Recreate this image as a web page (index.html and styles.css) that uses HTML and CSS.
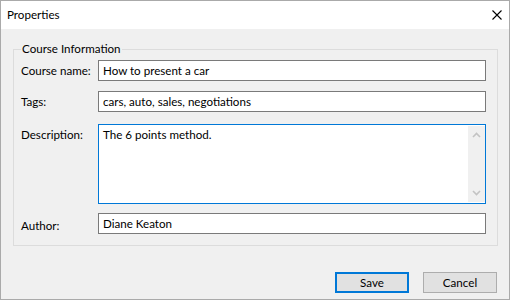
FILE: index.html
```html
<!DOCTYPE html>
<html>
<head>
    <title>Properties</title>
    <link rel="stylesheet" href="styles.css">
</head>
<body>
    <div class="window">
        <div class="titlebar">
            <span class="title">Properties</span>
            <svg class="close" width="10" height="10" viewBox="0 0 10 10">
                <path d="M0.5 0.5 L9.5 9.5 M9.5 0.5 L0.5 9.5" stroke="#000" stroke-width="1.1" fill="none"/>
            </svg>
        </div>

        <div class="content">
            <fieldset class="group">
                <legend>Course Information</legend>

                <div class="row">
                    <label>Course name:</label>
                    <input class="field" type="text" value="How to present a car">
                </div>

                <div class="row">
                    <label>Tags:</label>
                    <input class="field" type="text" value="cars, auto, sales, negotiations">
                </div>

                <div class="row row-memo">
                    <label>Description:</label>
                    <div class="memo">
                        <textarea>The 6 points method.</textarea>
                        <div class="vscroll">
                            <svg width="9" height="6" viewBox="0 0 9 6"><path d="M1 5 L4.5 1.5 L8 5" stroke="#c3c3c3" stroke-width="1.6" fill="none"/></svg>
                            <svg width="9" height="6" viewBox="0 0 9 6"><path d="M1 1 L4.5 4.5 L8 1" stroke="#c3c3c3" stroke-width="1.6" fill="none"/></svg>
                        </div>
                    </div>
                </div>

                <div class="row row-author">
                    <label>Author:</label>
                    <input class="field" type="text" value="Diane Keaton">
                </div>
            </fieldset>

            <div class="buttons">
                <button class="btn btn-default">Save</button>
                <button class="btn">Cancel</button>
            </div>
        </div>
    </div>
</body>
</html>
```

FILE: styles.css
```css
body {
    margin: 0;
    font-family: Lato, "Liberation Sans", Arial, sans-serif;
    font-size: 11.6px;
    color: #000;
}
.window {
    width: 510px;
    height: 300px;
    box-sizing: border-box;
    border: 1px solid #aaaaaa;
    background-color: #f0f0f0;
    display: flex;
    flex-direction: column;
}
.titlebar {
    height: 28px;
    background: white;
    display: flex;
    align-items: center;
    justify-content: space-between;
    padding: 0 7px 0 6px;
}
.title {
    margin-top: -1px;
}
.close {
    display: block;
    margin-top: -1px;
}
.content {
    padding: 12px 11px 0 12px;
}
.group {
    margin: 0;
    border: 1px solid #dcdcdc;
    padding: 3px 10px 11px 7px;
}
.group legend {
    padding: 0 1px;
    line-height: 16px;
}
.row {
    display: flex;
    align-items: center;
    margin-bottom: 10px;
}
.row label {
    width: 77px;
    flex: none;
}
.field {
    width: 388px;
    height: 21px;
    box-sizing: border-box;
    border: 1px solid #7a7a7a;
    background: white;
    padding: 0 4px;
    margin: 0;
    font-family: inherit;
    font-size: inherit;
    color: #000;
    outline: none;
}
.row-memo {
    align-items: flex-start;
    margin-top: 12px;
    margin-bottom: 9px;
}
.row-memo label {
    padding-top: 4px;
}
.memo {
    width: 388px;
    height: 80px;
    box-sizing: border-box;
    border: 1px solid #0078d7;
    background: white;
    display: flex;
}
.memo textarea {
    flex: 1;
    border: none;
    resize: none;
    outline: none;
    margin: 0;
    padding: 3px 4px;
    font-family: inherit;
    font-size: inherit;
    overflow: hidden;
}
.vscroll {
    width: 17px;
    margin: 1px 0 1px 0;
    background-color: #f0f0f0;
    display: flex;
    flex-direction: column;
    justify-content: space-between;
    align-items: center;
    padding: 6px 0 6px;
}
.vscroll svg {
    display: block;
}
.row-author {
    margin-bottom: 0;
}
.row-author label {
    padding-top: 4px;
}
.buttons {
    display: flex;
    justify-content: flex-end;
    gap: 14px;
    margin-top: 26px;
    padding-right: 1px;
}
.btn {
    width: 74px;
    height: 21px;
    box-sizing: border-box;
    border: 1px solid #adadad;
    background-color: #e1e1e1;
    font-family: inherit;
    font-size: inherit;
    color: #000;
    padding: 0;
    margin: 0;
}
.btn-default {
    border: 2px solid #0078d7;
}
```
